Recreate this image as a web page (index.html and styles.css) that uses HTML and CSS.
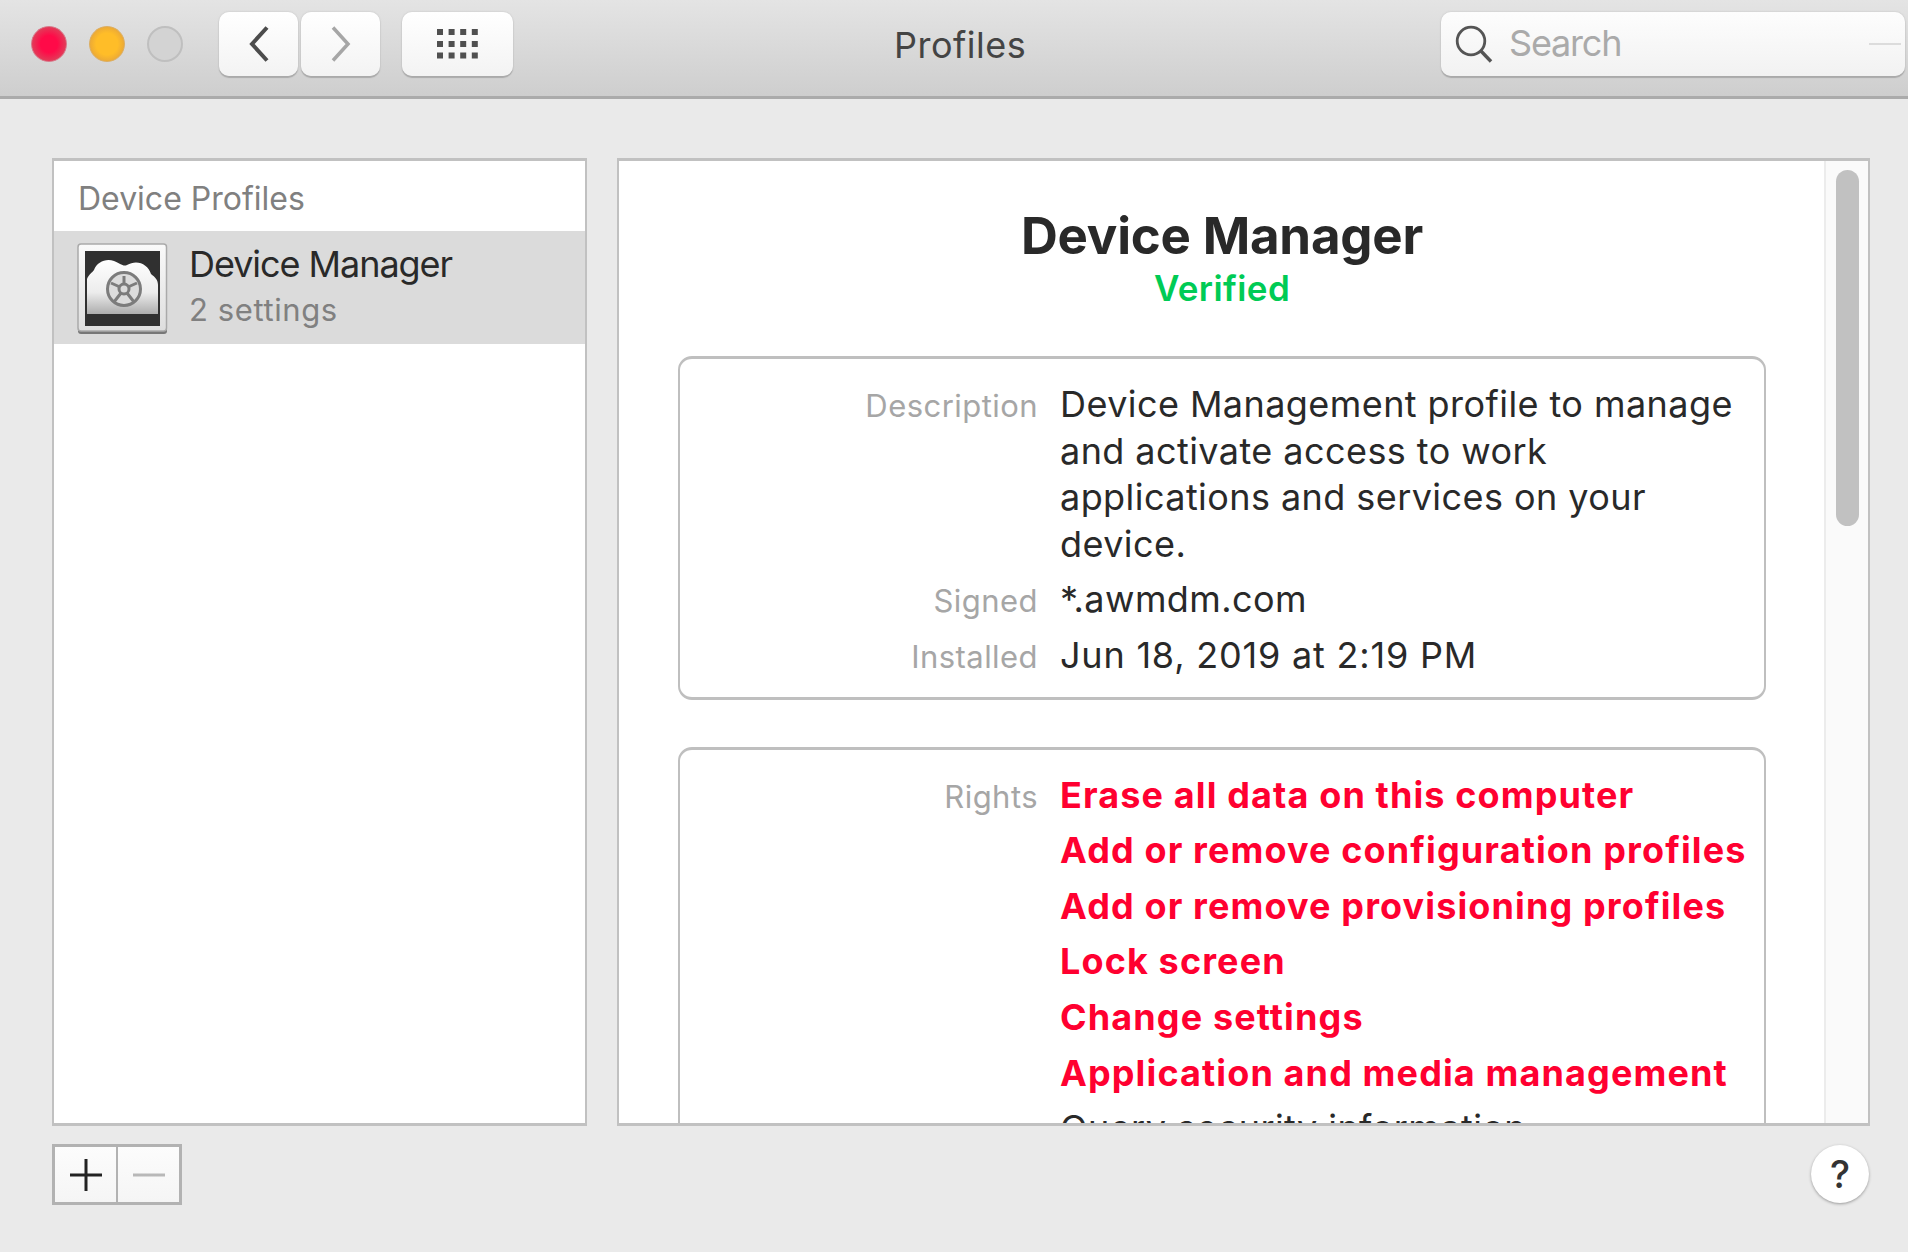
FILE: index.html
```html
<!DOCTYPE html>
<html lang="en">
<head>
<meta charset="utf-8">
<title>Profiles</title>
<link rel="stylesheet" href="styles.css">
</head>
<body>
<header class="toolbar">
  <div class="lights"><i class="light red"></i><i class="light yellow"></i><i class="light off"></i></div>
  <div class="nav">
    <button class="btn"><svg width="79" height="64" viewBox="0 0 79 64"><path d="M48 15.500L33 32l15 16.500" fill="none" stroke="#4c4c4c" stroke-width="4"/></svg></button>
    <button class="btn"><svg width="79" height="64" viewBox="0 0 79 64"><path d="M32 15.500L47 32 32 48.500" fill="none" stroke="#a6a6a6" stroke-width="3.500"/></svg></button>
  </div>
  <button class="btn grid-btn"><svg width="41" height="30" viewBox="0 0 41 30" fill="#505050"><path d="M0 0h6v6H0zM11.600 0h6v6h-6zM23.200 0h6v6h-6zM34.800 0h6v6h-6zM0 12h6v6H0zM11.600 12h6v6h-6zM23.200 12h6v6h-6zM34.800 12h6v6h-6zM0 23.500h6v6H0zM11.600 23.500h6v6h-6zM23.200 23.500h6v6h-6zM34.800 23.500h6v6h-6z"/></svg></button>
  <h1 class="title">Profiles</h1>
  <div class="search">
    <svg width="38" height="38" viewBox="0 0 38 38" fill="none" stroke="#555" stroke-width="2.800"><circle cx="16" cy="16" r="13.800"/><path d="M25.500 25.500L36 36.500" stroke-width="3.400"/></svg>
    <span>Search</span><i class="clear"></i>
  </div>
</header>
<main class="body">
  <div class="panels">
    <aside class="list">
      <div class="group">Device Profiles</div>
      <div class="item">
        <svg class="icon" width="91" height="92" viewBox="0 0 91 92">
          <defs>
            <linearGradient id="cloud" x1="0" y1="0" x2="0" y2="1"><stop offset="0" stop-color="#fff"/><stop offset=".6" stop-color="#ececec"/><stop offset="1" stop-color="#adadad"/></linearGradient>
            <linearGradient id="frame" x1="0" y1="0" x2="0" y2="1"><stop offset="0" stop-color="#fafafa"/><stop offset="1" stop-color="#dedede"/></linearGradient>
          </defs>
          <rect x="1" y="2" width="89" height="89" rx="3" fill="#777"/>
          <rect x="1" y="1" width="88.500" height="87" rx="3" fill="url(#frame)" stroke="#aaa" stroke-width="1.500"/>
          <rect x="8" y="8" width="75" height="75" fill="#303030"/>
          <path d="M10 36C12 31 15 30 17 27 20 19 29 15 37 18 43 20 46 24 50 22 60 16 71 21 74 31 78 34 81 37 81 42V71H10Z" fill="url(#cloud)"/>
          <g fill="none" stroke="#7c7c7c"><circle cx="47" cy="46" r="16.500" stroke-width="3" fill="#dcdcdc"/><circle cx="47" cy="46" r="5" stroke-width="3"/><path d="M47 41V33M51 44l9-4M50 50l7 9M44 50l-7 9M43 44l-9-4" stroke-width="3"/></g>
        </svg>
        <div class="item-text"><div class="name">Device Manager</div><div class="sub">2 settings</div></div>
      </div>
    </aside>
    <section class="detail">
      <div class="content">
        <h2 class="heading">Device Manager</h2>
        <div class="verified">Verified</div>
        <dl class="card">
          <dt>Description</dt><dd>Device Management profile to manage<br>and activate access to work<br>applications and services on your<br>device.</dd>
          <dt>Signed</dt><dd>*.awmdm.com</dd>
          <dt>Installed</dt><dd class="date">Jun 18, 2019 at 2:19 PM</dd>
        </dl>
        <dl class="card">
          <dt>Rights</dt><dd class="danger">Erase all data on this computer</dd>
          <dd class="danger">Add or remove configuration profiles</dd>
          <dd class="danger">Add or remove provisioning profiles</dd>
          <dd class="danger">Lock screen</dd>
          <dd class="danger">Change settings</dd>
          <dd class="danger">Application and media management</dd>
          <dd>Query security information</dd>
        </dl>
      </div>
      <div class="track"><div class="thumb"></div></div>
    </section>
  </div>
  <footer class="actions">
    <div class="pair">
      <button><svg width="32" height="32" viewBox="0 0 32 32"><path d="M0 16h32M16 0v32" stroke="#222" stroke-width="3"/></svg></button>
      <button><svg width="32" height="32" viewBox="0 0 32 32"><path d="M0 16h32" stroke="#b8b8b8" stroke-width="3"/></svg></button>
    </div>
    <button class="help">?</button>
  </footer>
</main>
</body>
</html>
```
FILE: styles.css
```css
* { box-sizing: border-box; margin: 0; padding: 0; }
body { width: 1908px; height: 1252px; overflow: hidden; background: #eaeaea; color: #292929; font-family: Inter, "Liberation Sans", sans-serif; display: flex; flex-direction: column; }
button { font: inherit; border: 0; background: none; display: flex; align-items: center; justify-content: center; }
svg { display: block; flex: none; }

.toolbar { height: 99px; flex: none; display: flex; align-items: flex-start; padding: 12px 3px 0 31px; border-bottom: 3px solid #ababab; background: linear-gradient(#e4e4e4, #cecece); }
.lights { display: flex; align-items: center; gap: 22px; width: 188px; height: 64px; }
.light { width: 36px; height: 36px; border-radius: 50%; }
.red { background: radial-gradient(#ff0a48 35%, #e33a58 70%); border: 1px solid #d8788a; }
.yellow { background: radial-gradient(#ffbd28 45%, #e9a738 75%); border: 1px solid #dcae62; }
.off { background: #d3d3d3; border: 2px solid #bfbfbf; }
.nav { display: flex; gap: 3px; width: 183px; }
.btn { width: 79px; height: 64px; border-radius: 10px; background: linear-gradient(#fff, #f3f3f3); box-shadow: 0 2px 1px #aaa, 0 0 2px #bbb; }
.grid-btn { width: 111px; }
.title { flex: 1; padding-left: 381px; font-size: 36px; font-weight: 400; line-height: 66px; letter-spacing: .5px; color: #444; }
.search { width: 464px; height: 64px; display: flex; align-items: center; padding: 0 4px 0 14px; border-radius: 10px; background: linear-gradient(#fdfdfd, #f2f2f2); box-shadow: 0 2px 1px #aaa, 0 0 2px #bbb; font-size: 36px; line-height: 60px; letter-spacing: -1.200px; color: #aaa; }
.search span { padding: 0 0 3px 16px; }
.clear { width: 32px; height: 2px; margin-left: auto; background: #dcdcdc; }

.body { flex: 1; padding: 59px 38px 0 52px; }
.panels { display: flex; justify-content: space-between; height: 968px; }
.list { width: 535px; background: #fff; border: solid #c1c1c1; border-width: 3px 2px; }
.group { height: 70px; padding-left: 24px; font-size: 32px; line-height: 76px; color: #808080; }
.item { height: 113px; display: flex; background: #dbdbdb; padding: 12px 0 0 23px; }
.item-text { padding-left: 21px; }
.name { font-size: 36px; line-height: 44px; margin-top: -1px; letter-spacing: -1.050px; }
.sub { font-size: 31px; line-height: 44px; margin-top: 2px; letter-spacing: .6px; color: #808080; }
.detail { width: 1253px; display: flex; background: #fff; border: solid #c1c1c1; border-width: 3px 2px; overflow: hidden; }
.content { flex: 1; padding: 44px 58px 0 59px; overflow: hidden; white-space: nowrap; }
.heading { font-size: 51px; font-weight: 700; line-height: 62px; letter-spacing: -.200px; text-align: center; }
.verified { font-size: 35px; font-weight: 600; line-height: 42px; letter-spacing: .4px; text-align: center; color: #00cb55; }
.card { display: grid; grid-template-columns: 358px auto; column-gap: 22px; row-gap: 9px; align-items: baseline; border: solid #bfbfbf; border-width: 3px 2px; border-radius: 14px; padding: 22px 0 18px; margin-top: 47px; }
.card + .card { margin-top: 47px; }
dt { text-align: right; font-size: 31px; letter-spacing: .45px; color: #a6a6a6; }
dd { grid-column: 2; font-size: 36px; line-height: 46.600px; letter-spacing: .43px; }
.date { letter-spacing: .8px; }
.danger { font-weight: 700; letter-spacing: 1.120px; color: #ff0030; }
.track { width: 44px; background: #fafafa; border-left: 2px solid #ececec; padding: 9px 0 0 10px; }
.thumb { width: 23px; height: 356px; border-radius: 12px; background: #c1c1c1; }

.actions { display: flex; justify-content: space-between; padding: 18px 1px 0 0; }
.pair { display: flex; width: 130px; height: 61px; border: 3px solid #b2b2b2; background: linear-gradient(#fcfcfc, #f5f5f5); }
.pair button { flex: 1; }
.pair button + button { border-left: 2px solid #b2b2b2; }
.help { width: 58px; height: 58px; margin-top: 1px; border-radius: 50%; background: #fff; box-shadow: 0 1px 3px #999; font-size: 38px; font-weight: 500; color: #333; }
```
